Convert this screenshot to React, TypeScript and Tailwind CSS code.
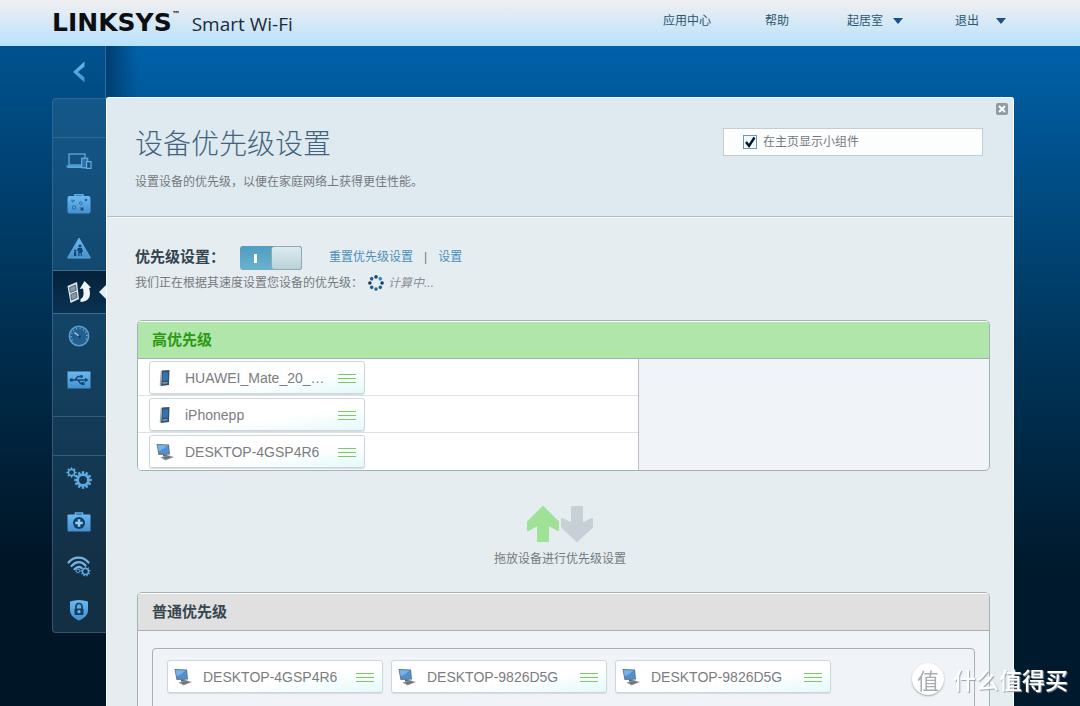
import React, { useState } from 'react';

type DeviceKind = 'phone' | 'desktop';

interface Device {
  id: number;
  name: string;
  kind: DeviceKind;
}

const highPriority: Device[] = [
  { id: 1, name: 'HUAWEI_Mate_20_…', kind: 'phone' },
  { id: 2, name: 'iPhonepp', kind: 'phone' },
  { id: 3, name: 'DESKTOP-4GSP4R6', kind: 'desktop' },
];

const normalPriority: Device[] = [
  { id: 4, name: 'DESKTOP-4GSP4R6', kind: 'desktop' },
  { id: 5, name: 'DESKTOP-9826D5G', kind: 'desktop' },
  { id: 6, name: 'DESKTOP-9826D5G', kind: 'desktop' },
];

const GearShape: React.FC<{ cx: number; cy: number; r: number; teeth: number }> = ({ cx, cy, r, teeth }) => (
  <g>
    {Array.from({ length: teeth }, (_, i) => (
      <rect
        key={i}
        x={cx - r * 0.14}
        y={cy - r}
        width={r * 0.28}
        height={r * 0.4}
        fill="#5da9e0"
        transform={`rotate(${(360 / teeth) * i} ${cx} ${cy})`}
      />
    ))}
    <circle cx={cx} cy={cy} r={r * 0.6} fill="none" stroke="#5da9e0" strokeWidth={r * 0.3} />
  </g>
);

const DevicesIcon = () => (
  <svg width="26" height="18" viewBox="0 0 26 18">
    <rect x="3" y="3" width="16" height="11" fill="#16507f" stroke="#57a4da" strokeWidth="1.4" />
    <path d="M0 14.500h19V17H1.5z" fill="#57a4da" />
    <rect x="15.7" y="7.2" width="6" height="9.6" fill="#2f70a4" stroke="#62aee3" strokeWidth="1.2" />
    <rect x="20.6" y="10.6" width="4.4" height="6.8" fill="#16507f" stroke="#62aee3" strokeWidth="1.2" />
  </svg>
);

const GuestIcon = () => (
  <svg width="24" height="20" viewBox="0 0 24 20">
    <path d="M8 2V0.8h8V2" fill="none" stroke="#5fb0ea" strokeWidth="1.6" />
    <rect x="0.5" y="2" width="23" height="17.5" rx="2" fill="url(#nav)" />
    <path d="M4.5 6l3 .6-2 1.800zM5.500 12h3v3h-3zM12 9l2-1.400 1.600 2-2 1.200z" fill="none" stroke="#2b74ad" />
    <circle cx="19" cy="6" r="1.300" fill="#1f649c" />
    <rect x="13.500" y="13.500" width="3" height="3" fill="#1a5185" />
  </svg>
);

const ParentalIcon = () => (
  <svg width="24" height="22" viewBox="0 0 24 22">
    <path d="M12 1L23.400 21H.6z" fill="url(#nav)" stroke="#5fa9dc" strokeLinejoin="round" />
    <circle cx="13" cy="9" r="1.500" fill="#11436e" />
    <path d="M11 11h4l1 4h-1.200v4h-1.100v-3h-1.200v3h-1.200v-6L9 15z" fill="#11436e" />
    <circle cx="8" cy="13.600" r="1.100" fill="#11436e" />
    <path d="M7 15h2.200v4H7z" fill="#11436e" />
  </svg>
);

const PriorityIcon = () => (
  <svg width="24" height="24" viewBox="0 0 24 24">
    <path d="M.5 6l9.500-4 2 17L3.500 23z" fill="#dfe7ed" />
    <path d="M2.500 7.500l6-2.500.700 5.200-5.700 2.300zM3.800 14.600l5.600-2.300.600 5.200-5.400 2.500z" fill="#8799a7" stroke="#52697b" />
    <path d="M13.500 22c8.500-.5 11-5.500 8.600-14l1.900-.4L17.500 1l-4.700 8 3.200-.4c1.200 6.400.4 9-2.500 10.400z" fill="#f2f6f9" />
  </svg>
);

const SpeedIcon = () => (
  <svg width="22" height="22" viewBox="0 0 22 22">
    <circle cx="11" cy="11" r="9.700" fill="#235f90" stroke="#5b9dcc" strokeWidth="1.500" />
    <path d="M4.500 15.500a7.800 7.800 0 1113 0" fill="none" stroke="#6dabd6" strokeWidth="1.600" strokeDasharray="1 2.400" />
    <path d="M6.500 7.500l5 4" stroke="#a5d2f0" strokeWidth="1.500" />
    <circle cx="11.500" cy="11.500" r="1.200" fill="#0f3b61" />
  </svg>
);

const UsbIcon = () => (
  <svg width="24" height="18" viewBox="0 0 24 18">
    <rect x="0.500" y="0.500" width="23" height="17" fill="url(#nav)" />
    <path d="M4 9h15M8 9l3-3.500h3M11 9l2.500 3.500H16" stroke="#154770" strokeWidth="1.300" fill="none" />
    <circle cx="4.500" cy="9" r="1.800" fill="#154770" />
    <circle cx="14.500" cy="5.500" r="1.400" fill="#154770" />
    <rect x="14.500" y="11" width="3" height="3" fill="#154770" />
    <path d="M18 6.800L21.500 9 18 11.200z" fill="#154770" />
  </svg>
);

const SettingsIcon = () => (
  <svg width="26" height="22" viewBox="0 0 26 22">
    <GearShape cx={5.5} cy={5.5} r={5.2} teeth={8} />
    <GearShape cx={17} cy={13} r={8.8} teeth={12} />
  </svg>
);

const TroubleshootIcon = () => (
  <svg width="24" height="20" viewBox="0 0 24 20">
    <path d="M8.500 3V1h7v2" fill="none" stroke="#5fb0ea" strokeWidth="1.600" />
    <rect x="0.500" y="2.500" width="23" height="17" rx="1" fill="url(#nav)" />
    <circle cx="12" cy="11" r="6" fill="#123f64" />
    <path d="M12 7.200v7.600M8.200 11h7.600" stroke="#8fcdf5" strokeWidth="2.600" />
  </svg>
);

const WirelessIcon = () => (
  <svg width="24" height="22" viewBox="0 0 24 22">
    <g fill="none" stroke="#77b3de" strokeWidth="2.200" strokeLinecap="round">
      <path d="M1.500 7.500C7 1 16 1 21.500 7.500" />
      <path d="M4.500 11C9 6 14.500 6 18.500 10.500" />
      <path d="M7.500 14.200c2.500-2.700 5-2.900 7-1.200" />
    </g>
    <GearShape cx={11} cy={15.8} r={2.8} teeth={7} />
    <GearShape cx={18.5} cy={16.5} r={5} teeth={9} />
  </svg>
);

const SecurityIcon = () => (
  <svg width="20" height="22" viewBox="0 0 20 22">
    <path d="M1 2.500Q10-.5 19 2.500V11c0 5-4 8.500-9 10.500C5 19.500 1 16 1 11z" fill="url(#nav)" />
    <path d="M7 10V7.500a3 3 0 016 0V10" fill="none" stroke="#123f64" strokeWidth="1.600" />
    <rect x="5.500" y="9.500" width="9" height="6.500" rx="1" fill="#123f64" />
    <circle cx="10" cy="12.700" r="1.600" fill="#6bb4e6" />
  </svg>
);

const DeviceIcon: React.FC<{ kind: DeviceKind }> = ({ kind }) =>
  kind === 'phone' ? (
    <svg width="18" height="18" viewBox="0 0 18 18" className="shrink-0">
      <path d="M6 1.500L13.500 1 13 16l-8 1z" fill="#34506a" />
      <path d="M6 1.500L5 17l-1.300-.8L4.700 2z" fill="#9ba8b3" />
      <path d="M7 3.500l5.200-.3-.4 8.300-5.400.4z" fill="#3474ad" />
      <path d="M6.500 13.200l5-.4-.1 1.700-5 .5z" fill="#7f95a7" />
    </svg>
  ) : (
    <svg width="18" height="18" viewBox="0 0 18 18" className="shrink-0">
      <path d="M.5 1l12.500.5 1 10-11.500.500z" fill="#66717d" />
      <path d="M1.500 2l10.600.4.800 8-9.600.300z" fill="#5190d6" />
      <path d="M1.500 2l10.600.4-9.200 6z" fill="#79b0e8" />
      <path d="M7 11.500h4l.5 2H7z" fill="#5b636b" />
      <path d="M4.500 14.500l7-2.500 6.500 2-8.500 3.500z" fill="#90969b" />
      <path d="M6.500 14.700l5.500-1.600 3.500 1.100-6 2.100z" fill="#6b7279" />
    </svg>
  );

const DeviceCard: React.FC<{ device: Device }> = ({ device }) => (
  <div className="flex h-[33px] w-[216px] shrink-0 cursor-move items-center rounded-[3px] border border-[#ccd6dc] bg-gradient-to-br from-white from-60% to-[#e4f9fa] pr-2 pl-[6px] shadow-[0_1px_1px_#d3dade]">
    <DeviceIcon kind={device.kind} />
    <span className="ml-[11px] whitespace-nowrap text-sm text-[#7b7d7f]">{device.name}</span>
    <svg width="18" height="10" viewBox="0 0 18 10" className="ml-auto shrink-0">
      <path d="M0 1.500h18M0 5.500h18M0 9.500h18" stroke="#7ccb60" strokeWidth="1" />
    </svg>
  </div>
);

const NavItem: React.FC<{ label: string; active?: boolean; children: React.ReactNode }> = ({ label, active, children }) => (
  <a
    href="#"
    aria-label={label}
    className={
      active
        ? 'relative flex h-11 items-center justify-center border-y border-[#3f6d8f] bg-gradient-to-b from-[#04213a] to-[#0a3253] pr-[2px]'
        : 'flex h-11 items-center justify-center pr-[2px]'
    }
  >
    {children}
    {active && (
      <svg width="7" height="14" viewBox="0 0 7 14" className="absolute top-[14px] right-0">
        <path d="M7 0v14L0 7z" fill="#e6edf1" />
      </svg>
    )}
  </a>
);

const Caret = () => (
  <svg width="10" height="6" viewBox="0 0 10 6">
    <path d="M0 0h10L5 6z" fill="#1c4f84" />
  </svg>
);

const Sidebar = () => (
  <nav className="w-[54px] shrink-0">
    <button aria-label="返回" className="flex h-[52px] w-full items-center justify-center border-r border-[#2d6c9c]">
      <svg width="12" height="22" viewBox="0 0 12 22">
        <path d="M11.500 .5v5L5 11l6.500 5.500v5L0 11z" fill="url(#nav)" />
      </svg>
    </button>
    <div className="rounded-l border border-r-0 border-[#447494]/60 bg-[#4a7fa3]/25">
      <div className="h-[39px] border-b border-[#447494]/60" />
      <NavItem label="设备列表"><DevicesIcon /></NavItem>
      <NavItem label="访客访问"><GuestIcon /></NavItem>
      <NavItem label="家长控制"><ParentalIcon /></NavItem>
      <NavItem label="设备优先级设置" active><PriorityIcon /></NavItem>
      <NavItem label="速度测试"><SpeedIcon /></NavItem>
      <NavItem label="外部存储"><UsbIcon /></NavItem>
      <div className="mt-[14px] h-10 border-y border-[#447494]/60" />
      <NavItem label="连接"><SettingsIcon /></NavItem>
      <NavItem label="故障排除"><TroubleshootIcon /></NavItem>
      <NavItem label="无线"><WirelessIcon /></NavItem>
      <NavItem label="安全"><SecurityIcon /></NavItem>
    </div>
  </nav>
);

const spinnerDots = ['#2a8bd0', '#183f66', '#235d8c', '#2b6a9b', '#235d8c', '#17395c', '#235d8c', '#1b4a77'];

export default function App() {
  const [showWidget, setShowWidget] = useState(true);
  const [enabled, setEnabled] = useState(true);

  return (
    <div className="flex h-screen flex-col overflow-hidden bg-[#00182b] font-['Liberation_Sans','Noto_Sans_CJK_SC',sans-serif] text-xs text-[#75797d]">
      {/* Shared gradient for the menu icons */}
      <svg width="0" height="0" className="absolute">
        <defs>
          <linearGradient id="nav" x1="0" y1="0" x2="0" y2="1">
            <stop offset="0" stopColor="#6cb9f0" />
            <stop offset="1" stopColor="#4290cf" />
          </linearGradient>
        </defs>
      </svg>

      <header className="flex h-[46px] shrink-0 items-start justify-between bg-gradient-to-b from-[#f0eff0] to-[#b8e2fd] pr-[74px] pl-[52px]">
        <div className="flex items-baseline pt-[7px]">
          <span className="font-['DejaVu_Sans',sans-serif] text-[25px] leading-8 font-bold text-[#0c0e12]">LINKSYS</span>
          <span className="self-start font-['DejaVu_Sans',sans-serif] text-[8px] leading-4 font-bold text-[#0c0e12]">™</span>
          <span className="ml-3 font-['Open_Sans',sans-serif] text-[19px] leading-8 text-[#1b2a38]">Smart Wi-Fi</span>
        </div>
        <div className="flex items-center pt-3 leading-[18px] text-[#2c5673]">
          <a href="#">应用中心</a>
          <a href="#" className="ml-[54px]">帮助</a>
          <button className="ml-[58px] flex items-center gap-[10px]">起居室 <Caret /></button>
          <button className="ml-[52px] flex items-center gap-[17px]">退出 <Caret /></button>
        </div>
      </header>

      <main className="flex min-h-0 flex-1 items-start bg-gradient-to-b from-[#0061a9] via-[#00365c] via-45% to-[#00192c] to-80% pr-[66px]">
        <div className="flex shrink-0 self-stretch bg-black/15 pl-[52px]">
          <Sidebar />
        </div>

        <div className="min-w-0 flex-1">
          <div className="h-[51px] w-8 bg-gradient-to-r from-[#003e70] to-transparent" />
          <div className="relative rounded-t-[3px] border border-b-0 border-white bg-[#e6edf1]">
            <button
              aria-label="关闭"
              className="absolute top-[5px] right-[5px] flex size-3 items-center justify-center rounded-[2px] bg-[#8f9ba2]"
            >
              <svg width="8" height="8" viewBox="0 0 8 8">
                <path d="M1 1l6 6M7 1L1 7" stroke="#fff" strokeWidth="2" />
              </svg>
            </button>

            <div className="flex justify-between border-b border-[#b4bdc3] bg-[#dfeaf0] pt-[29px] pr-[30px] pb-[25px] pl-7">
              <div>
                <h1 className="text-[28px] leading-9 font-light text-[#42637d]">设备优先级设置</h1>
                <p className="mt-[10px] leading-[18px]">设置设备的优先级，以便在家庭网络上获得更佳性能。</p>
              </div>
              <label className="mt-px flex h-7 w-[260px] items-center border border-[#c3ced3] bg-[#fcfdfd] pl-[19px]">
                <span className="grid">
                  <input
                    type="checkbox"
                    checked={showWidget}
                    onChange={(e) => setShowWidget(e.target.checked)}
                    className="col-start-1 row-start-1 size-[14px] appearance-none border border-[#6d9cae] bg-[#f1fafc]"
                  />
                  {showWidget && (
                    <svg width="14" height="14" viewBox="0 0 14 14" className="pointer-events-none col-start-1 row-start-1">
                      <path d="M3 7l3 4 5.500-8.500" fill="none" stroke="#04152a" strokeWidth="2.400" />
                    </svg>
                  )}
                </span>
                <span className="ml-[6px] leading-[18px]">在主页显示小组件</span>
              </label>
            </div>

            <div className="border-t border-[#f4f8fa] pt-[26px] pr-[23px] pl-[30px]">
              <div className="-ml-[2px] flex h-[26px] items-center">
                <h2 className="w-[105px] text-[15px] font-bold text-[#33434f]">优先级设置：</h2>
                <button
                  role="switch"
                  aria-checked={enabled}
                  aria-label="优先级设置"
                  onClick={() => setEnabled(!enabled)}
                  className={
                    enabled
                      ? 'mt-[2px] flex h-6 w-[62px] items-stretch rounded-[3px] bg-gradient-to-b from-[#4f9dbf] to-[#6bb2d0]'
                      : 'mt-[2px] flex h-6 w-[62px] flex-row-reverse items-stretch rounded-[3px] bg-[#a9b6be]'
                  }
                >
                  <span className="flex flex-1 items-center justify-center">
                    <span className="h-[9px] w-[3px] bg-white" />
                  </span>
                  <span className="w-[31px] rounded-[3px] border border-[#93a9b2] bg-gradient-to-b from-[#dcebef] to-[#b9d2d9]" />
                </button>
                <a href="#" className="ml-[27px] text-[#4a8fb8]">重置优先级设置</a>
                <span className="mx-[11px]">|</span>
                <a href="#" className="text-[#4a8fb8]">设置</a>
              </div>
              <div className="mt-1 -ml-[2px] flex h-[18px] items-center leading-[18px]">
                <span className="w-[233px]">我们正在根据其速度设置您设备的优先级：</span>
                <svg width="16" height="16" viewBox="0 0 16 16">
                  {spinnerDots.map((color, i) => (
                    <circle key={i} cx="8" cy="1.900" r="1.800" fill={color} transform={`rotate(${45 * (i + 1)} 8 8)`} />
                  ))}
                </svg>
                <em className="ml-1 text-[#8b8f92]">计算中...</em>
              </div>

              <section className="mt-7 overflow-hidden rounded-[5px] border border-[#a5b1b8] bg-[#f0f4f8]">
                <h3 className="h-[38px] border-t border-b border-t-white border-b-[#a5b1b8] bg-[#b1e6ab] pl-[14px] text-[15px] leading-9 font-bold text-[#2b9a11]">
                  高优先级
                </h3>
                <ul className="w-[501px] border-r border-[#b7c0c6] bg-white">
                  {highPriority.map((d) => (
                    <li key={d.id} className="h-[37px] border-b border-[#dde1e4] pt-[2px] pl-[11px] last:border-b-0">
                      <DeviceCard device={d} />
                    </li>
                  ))}
                </ul>
              </section>

              <div className="flex flex-col items-center pt-[34px] pr-[7px]">
                <svg width="68" height="38" viewBox="0 0 68 38">
                  <path
                    d="M17 2L32 17v8L22 19.500V36H12V19.500L2 25v-8z"
                    fill="#9fe295"
                    stroke="#9fe295"
                    strokeWidth="2"
                    strokeLinejoin="round"
                  />
                  <path
                    d="M51 36L36 22v-8l10 5V2h10v17l10-5v8z"
                    fill="#c8d0d7"
                    stroke="#c8d0d7"
                    strokeWidth="2"
                    strokeLinejoin="round"
                  />
                </svg>
                <p className="mt-[7px] leading-[18px]">拖放设备进行优先级设置</p>
              </div>

              <section className="mt-6 overflow-hidden rounded-t-[5px] border border-[#a5b1b8] bg-[#f0f4f8]">
                <h3 className="h-[38px] border-t border-b border-t-white border-b-[#a5b1b8] bg-[#e0e0e0] pl-[14px] text-[15px] leading-9 font-bold text-[#36474f]">
                  普通优先级
                </h3>
                <div className="px-[14px] py-[17px]">
                  <div className="flex min-h-[120px] flex-wrap items-start gap-2 rounded border border-[#a5b1b8] px-[14px] py-[11px]">
                    {normalPriority.map((d) => (
                      <DeviceCard key={d.id} device={d} />
                    ))}
                  </div>
                </div>
              </section>
            </div>
          </div>
        </div>
      </main>

      {/* Site watermark */}
      <div className="fixed right-3 bottom-[11px] flex items-center gap-[9px] font-['Noto_Sans_CJK_SC',sans-serif] text-[23px] leading-8 font-medium text-white [text-shadow:1px_1px_1px_#9aa4ab]">
        <span className="flex size-8 items-center justify-center rounded-full bg-white text-[22px] font-normal text-[#a9adb0] shadow-[0_1px_2px_#9aa4ab] [text-shadow:none]">
          值
        </span>
        什么值得买
      </div>
    </div>
  );
}
